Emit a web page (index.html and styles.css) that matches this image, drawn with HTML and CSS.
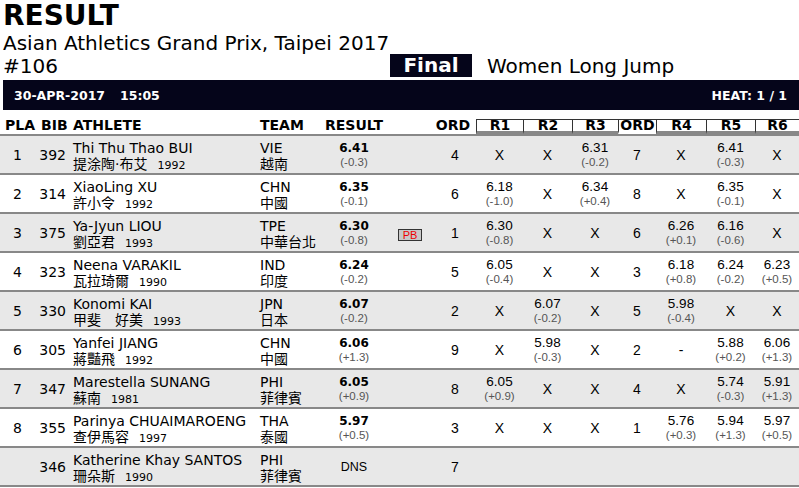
FILE: index.html
```html
<!DOCTYPE html>
<html>
<head>
<meta charset="utf-8">
<link rel="stylesheet" href="styles.css">
</head>
<body>
<div class="page">
  <div class="head">
    <div class="title">RESULT</div>
    <div class="sub">Asian Athletics Grand Prix, Taipei 2017</div>
    <div class="line3">
      <div class="num">#106</div>
      <div class="final">Final</div>
      <div class="event">Women Long Jump</div>
    </div>
  </div>
  <div class="bar">
    <div class="when"><span>30-APR-2017</span><span class="time">15:05</span></div>
    <div class="heat">HEAT: 1 / 1</div>
  </div>
  <div class="grid thead">
    <div class="h hpla">PLA</div>
    <div class="h hbib">BIB</div>
    <div class="h hath">ATHLETE</div>
    <div class="h hteam">TEAM</div>
    <div class="h hres">RESULT</div>
    <div class="h"></div>
    <div class="h hord">ORD</div>
    <div class="hr">R1</div>
    <div class="hr">R2</div>
    <div class="hr">R3</div>
    <div class="hr hord2">ORD</div>
    <div class="hr">R4</div>
    <div class="hr">R5</div>
    <div class="hr">R6</div>
  </div>

  <div class="grid row alt">
    <div class="c pla">1</div><div class="c bib">392</div>
    <div class="ath"><div class="nm">Thi Thu Thao BUI</div><div class="cn">提涂陶·布艾<span class="yr">1992</span></div></div>
    <div class="team"><div>VIE</div><div class="cn">越南</div></div>
    <div class="c res"><div class="v">6.41</div><div class="w">(-0.3)</div></div>
    <div class="c"></div><div class="c ord">4</div>
    <div class="c r x">X</div><div class="c r x">X</div>
    <div class="c r"><div class="v">6.31</div><div class="w">(-0.2)</div></div>
    <div class="c ord2">7</div>
    <div class="c r x">X</div>
    <div class="c r"><div class="v">6.41</div><div class="w">(-0.3)</div></div>
    <div class="c r x">X</div>
  </div>

  <div class="grid row">
    <div class="c pla">2</div><div class="c bib">314</div>
    <div class="ath"><div class="nm">XiaoLing XU</div><div class="cn">許小令<span class="yr">1992</span></div></div>
    <div class="team"><div>CHN</div><div class="cn">中國</div></div>
    <div class="c res"><div class="v">6.35</div><div class="w">(-0.1)</div></div>
    <div class="c"></div><div class="c ord">6</div>
    <div class="c r"><div class="v">6.18</div><div class="w">(-1.0)</div></div>
    <div class="c r x">X</div>
    <div class="c r"><div class="v">6.34</div><div class="w">(+0.4)</div></div>
    <div class="c ord2">8</div>
    <div class="c r x">X</div>
    <div class="c r"><div class="v">6.35</div><div class="w">(-0.1)</div></div>
    <div class="c r x">X</div>
  </div>

  <div class="grid row alt">
    <div class="c pla">3</div><div class="c bib">375</div>
    <div class="ath"><div class="nm">Ya-Jyun LIOU</div><div class="cn">劉亞君<span class="yr">1993</span></div></div>
    <div class="team"><div>TPE</div><div class="cn">中華台北</div></div>
    <div class="c res"><div class="v">6.30</div><div class="w">(-0.8)</div></div>
    <div class="c"><span class="pb">PB</span></div><div class="c ord">1</div>
    <div class="c r"><div class="v">6.30</div><div class="w">(-0.8)</div></div>
    <div class="c r x">X</div>
    <div class="c r x">X</div>
    <div class="c ord2">6</div>
    <div class="c r"><div class="v">6.26</div><div class="w">(+0.1)</div></div>
    <div class="c r"><div class="v">6.16</div><div class="w">(-0.6)</div></div>
    <div class="c r x">X</div>
  </div>

  <div class="grid row">
    <div class="c pla">4</div><div class="c bib">323</div>
    <div class="ath"><div class="nm">Neena VARAKIL</div><div class="cn">瓦拉琦爾<span class="yr">1990</span></div></div>
    <div class="team"><div>IND</div><div class="cn">印度</div></div>
    <div class="c res"><div class="v">6.24</div><div class="w">(-0.2)</div></div>
    <div class="c"></div><div class="c ord">5</div>
    <div class="c r"><div class="v">6.05</div><div class="w">(-0.4)</div></div>
    <div class="c r x">X</div>
    <div class="c r x">X</div>
    <div class="c ord2">3</div>
    <div class="c r"><div class="v">6.18</div><div class="w">(+0.8)</div></div>
    <div class="c r"><div class="v">6.24</div><div class="w">(-0.2)</div></div>
    <div class="c r"><div class="v">6.23</div><div class="w">(+0.5)</div></div>
  </div>

  <div class="grid row alt">
    <div class="c pla">5</div><div class="c bib">330</div>
    <div class="ath"><div class="nm">Konomi KAI</div><div class="cn">甲斐　好美<span class="yr">1993</span></div></div>
    <div class="team"><div>JPN</div><div class="cn">日本</div></div>
    <div class="c res"><div class="v">6.07</div><div class="w">(-0.2)</div></div>
    <div class="c"></div><div class="c ord">2</div>
    <div class="c r x">X</div>
    <div class="c r"><div class="v">6.07</div><div class="w">(-0.2)</div></div>
    <div class="c r x">X</div>
    <div class="c ord2">5</div>
    <div class="c r"><div class="v">5.98</div><div class="w">(-0.4)</div></div>
    <div class="c r x">X</div>
    <div class="c r x">X</div>
  </div>

  <div class="grid row">
    <div class="c pla">6</div><div class="c bib">305</div>
    <div class="ath"><div class="nm">Yanfei JIANG</div><div class="cn">蔣豔飛<span class="yr">1992</span></div></div>
    <div class="team"><div>CHN</div><div class="cn">中國</div></div>
    <div class="c res"><div class="v">6.06</div><div class="w">(+1.3)</div></div>
    <div class="c"></div><div class="c ord">9</div>
    <div class="c r x">X</div>
    <div class="c r"><div class="v">5.98</div><div class="w">(-0.3)</div></div>
    <div class="c r x">X</div>
    <div class="c ord2">2</div>
    <div class="c r x">-</div>
    <div class="c r"><div class="v">5.88</div><div class="w">(+0.2)</div></div>
    <div class="c r"><div class="v">6.06</div><div class="w">(+1.3)</div></div>
  </div>

  <div class="grid row alt">
    <div class="c pla">7</div><div class="c bib">347</div>
    <div class="ath"><div class="nm">Marestella SUNANG</div><div class="cn">蘇南<span class="yr">1981</span></div></div>
    <div class="team"><div>PHI</div><div class="cn">菲律賓</div></div>
    <div class="c res"><div class="v">6.05</div><div class="w">(+0.9)</div></div>
    <div class="c"></div><div class="c ord">8</div>
    <div class="c r"><div class="v">6.05</div><div class="w">(+0.9)</div></div>
    <div class="c r x">X</div>
    <div class="c r x">X</div>
    <div class="c ord2">4</div>
    <div class="c r x">X</div>
    <div class="c r"><div class="v">5.74</div><div class="w">(-0.3)</div></div>
    <div class="c r"><div class="v">5.91</div><div class="w">(+1.3)</div></div>
  </div>

  <div class="grid row">
    <div class="c pla">8</div><div class="c bib">355</div>
    <div class="ath"><div class="nm">Parinya CHUAIMAROENG</div><div class="cn">查伊馬容<span class="yr">1997</span></div></div>
    <div class="team"><div>THA</div><div class="cn">泰國</div></div>
    <div class="c res"><div class="v">5.97</div><div class="w">(+0.5)</div></div>
    <div class="c"></div><div class="c ord">3</div>
    <div class="c r x">X</div>
    <div class="c r x">X</div>
    <div class="c r x">X</div>
    <div class="c ord2">1</div>
    <div class="c r"><div class="v">5.76</div><div class="w">(+0.3)</div></div>
    <div class="c r"><div class="v">5.94</div><div class="w">(+1.3)</div></div>
    <div class="c r"><div class="v">5.97</div><div class="w">(+0.5)</div></div>
  </div>

  <div class="grid row alt">
    <div class="c pla"></div><div class="c bib">346</div>
    <div class="ath"><div class="nm">Katherine Khay SANTOS</div><div class="cn">珊朵斯<span class="yr">1990</span></div></div>
    <div class="team"><div>PHI</div><div class="cn">菲律賓</div></div>
    <div class="c res"><div class="dns">DNS</div></div>
    <div class="c"></div><div class="c ord">7</div>
    <div class="c"></div><div class="c"></div><div class="c"></div>
    <div class="c"></div><div class="c"></div><div class="c"></div><div class="c"></div>
  </div>
</div>
</body>
</html>
```
FILE: styles.css
```css
* { box-sizing: border-box; }
html, body { margin: 0; padding: 0; background: #fff; }
body {
  font-family: "DejaVu Sans", "Noto Sans CJK TC", sans-serif;
  color: #000;
}
.page { width: 799px; }

.head { padding-left: 3px; }
.title { font-weight: bold; font-size: 28px; line-height: 31px; height: 31px; }
.sub { font-size: 20px; line-height: 24px; height: 24px; }
.line3 { display: flex; height: 25px; align-items: flex-start; }
.num { width: 387px; font-size: 20px; line-height: 23px; }
.final {
  width: 82px; height: 23px; margin-top: -1px;
  background: #05051a; color: #fff;
  font-weight: bold; font-size: 20px; line-height: 23px; text-align: center;
}
.event { margin-left: 15px; font-size: 20px; line-height: 23px; }

.bar {
  margin-left: 3px; height: 30px;
  background: #05051a; color: #fff;
  display: flex; justify-content: space-between; align-items: center;
  padding: 0 12px 0 11px;
  font-weight: bold; font-size: 12.5px;
}
.time { margin-left: 15px; }

.grid {
  display: grid;
  grid-template-columns: 38px 32px 188px 60px 72px 40px 46px 47px 49px 46px 38px 50px 49px 44px;
}
.thead {
  height: 26px;
  border-bottom: 2px solid #888;
  font-weight: bold; font-size: 14px;
}
.h { padding-top: 7px; line-height: 16px; white-space: nowrap; }
.hpla { padding-left: 5px; }
.hbib { padding-left: 3px; }
.hath { padding-left: 3px; }
.hteam { padding-left: 2px; }
.hres { text-align: center; }
.hord { text-align: center; }
.hr {
  align-self: start;
  margin-top: 9px;
  border-top: 1px solid #333;
  border-left: 1px solid #333;
  border-bottom: 3px solid #888;
  line-height: 11px;
  height: 15px;
  text-align: center;
}
.hord2 { border-bottom-color: #fff; }

.row { height: 39px; border-bottom: 2px solid #888; }
.row.alt { background: #e8e8e8; }

.c {
  display: flex; flex-direction: column;
  justify-content: center; align-items: center;
}
.pla { font-size: 14px; padding-right: 3px; }
.bib { font-size: 14px; align-items: flex-end; padding-right: 4px; }
.ath { padding: 4px 0 0 3px; font-size: 14px; line-height: 16px; white-space: nowrap; }
.team { padding: 4px 0 0 2px; font-size: 14px; line-height: 16px; white-space: nowrap; }
.nm, .cn { height: 16px; }
.cn { font-family: "DejaVu Sans", "Noto Sans CJK TC", sans-serif; }
.yr { font-size: 11px; margin-left: 10px; }

.res .v { font-weight: bold; font-size: 12px; line-height: 16px; }
.res .w { font-family: "Liberation Sans", Arial, sans-serif; font-size: 11.5px; line-height: 13px; color: #555; }
.dns { font-family: "Liberation Sans", Arial, sans-serif; font-size: 12.5px; }

.pb {
  font-family: "Liberation Sans", Arial, sans-serif;
  font-size: 11px; line-height: 10px;
  color: #e00; background: #c8c8c8;
  border: 1px solid #333;
  padding: 0 4px;
  margin-top: 4px;
}

.ord { font-family: "Liberation Sans", Arial, sans-serif; font-size: 14px; padding-left: 4px; }
.ord2 { font-family: "Liberation Sans", Arial, sans-serif; font-size: 14px; }
.r { font-family: "Liberation Sans", Arial, sans-serif; }
.r .v { font-size: 13.5px; line-height: 16px; }
.r .w { font-size: 11.5px; line-height: 13px; color: #555; }
.x { font-size: 14px; }
```
